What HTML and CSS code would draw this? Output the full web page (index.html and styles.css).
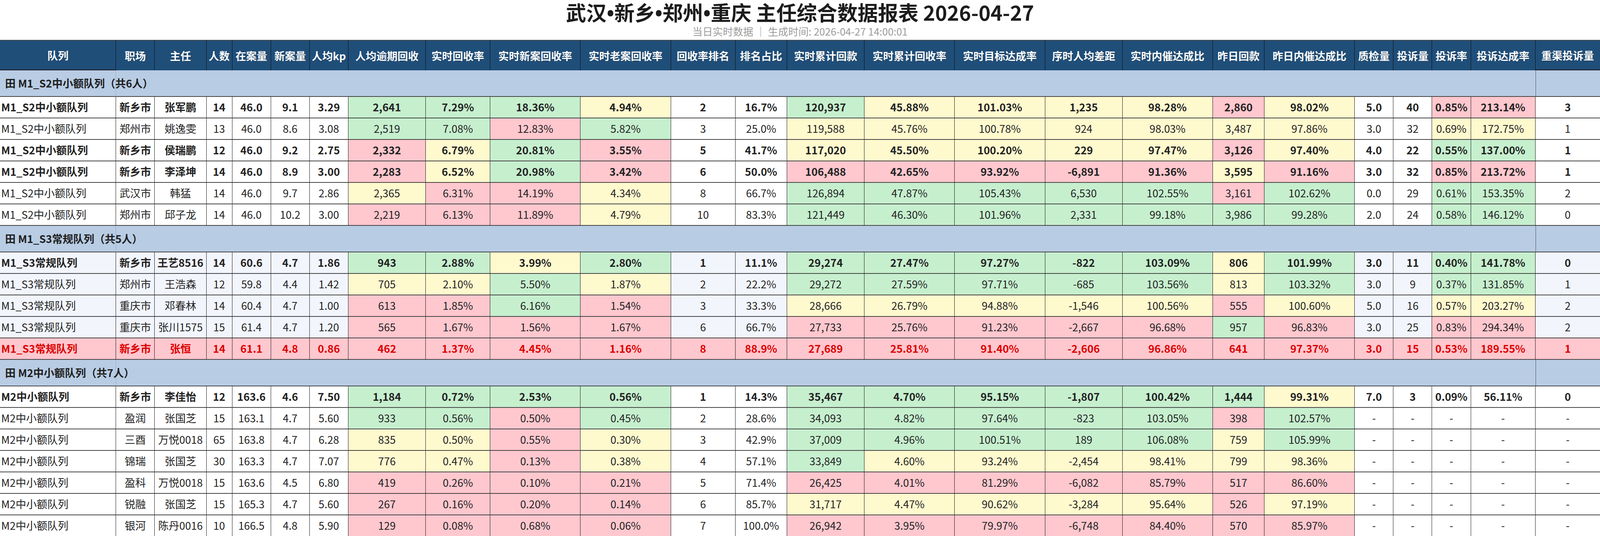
FILE: index.html
```html
<!DOCTYPE html>
<html lang="zh-CN">
<head>
<meta charset="utf-8">
<title>主任综合数据报表</title>
<link rel="stylesheet" href="styles.css">
</head>
<body>
<header class="head">
  <h1 class="title">武汉<span class="dot">•</span>新乡<span class="dot">•</span>郑州<span class="dot">•</span>重庆 主任综合数据报表 2026-04-27</h1>
  <div class="sub">当日实时数据 ｜ 生成时间: 2026-04-27 14:00:01</div>
</header>
<table class="tbl">
  <colgroup>
    <col class="w9"><col class="w3"><col class="w4"><col class="w2"><col class="w3"><col class="w3"><col class="w3">
    <col class="w6"><col class="w5"><col class="w7"><col class="w7"><col class="w5"><col class="w4">
    <col class="w6"><col class="w7"><col class="w7"><col class="w6"><col class="w7"><col class="w4"><col class="w7">
    <col class="w3"><col class="w3"><col class="w3"><col class="w5"><col class="w5">
  </colgroup>
  <thead>
    <tr>
      <th class="edge">队列</th><th>职场</th><th>主任</th><th>人数</th><th>在案量</th><th>新案量</th><th>人均kp</th>
      <th>人均逾期回收</th><th>实时回收率</th><th>实时新案回收率</th><th>实时老案回收率</th><th>回收率排名</th><th>排名占比</th>
      <th>实时累计回款</th><th>实时累计回收率</th><th>实时目标达成率</th><th>序时人均差距</th><th>实时内催达成比</th><th>昨日回款</th><th>昨日内催达成比</th>
      <th>质检量</th><th>投诉量</th><th>投诉率</th><th>投诉达成率</th><th class="edge">重渠投诉量</th>
    </tr>
  </thead>
  <tbody>
    <tr class="grp"><td class="gl"><span class="glabel">田 M1_S2中小额队列（共6人）</span></td><td class="gm" colspan="23"></td><td class="gr"></td></tr>
    <tr class="b"><td class="q">M1_S2中小额队列</td><td>新乡市</td><td>张军鹏</td><td>14</td><td>46.0</td><td>9.1</td><td>3.29</td><td class="g">2,641</td><td class="g">7.29%</td><td class="g">18.36%</td><td class="y">4.94%</td><td>2</td><td>16.7%</td><td class="g">120,937</td><td class="y">45.88%</td><td class="y">101.03%</td><td class="y">1,235</td><td class="y">98.28%</td><td class="p">2,860</td><td class="y">98.02%</td><td>5.0</td><td>40</td><td class="p">0.85%</td><td class="p">213.14%</td><td>3</td></tr>
    <tr><td class="q">M1_S2中小额队列</td><td>郑州市</td><td>姚逸雯</td><td>13</td><td>46.0</td><td>8.6</td><td>3.08</td><td class="g">2,519</td><td class="g">7.08%</td><td class="p">12.83%</td><td class="g">5.82%</td><td>3</td><td>25.0%</td><td class="y">119,588</td><td class="y">45.76%</td><td class="y">100.78%</td><td class="y">924</td><td class="y">98.03%</td><td class="y">3,487</td><td class="y">97.86%</td><td>3.0</td><td>32</td><td class="y">0.69%</td><td class="y">172.75%</td><td>1</td></tr>
    <tr class="b"><td class="q">M1_S2中小额队列</td><td>新乡市</td><td>侯瑞鹏</td><td>12</td><td>46.0</td><td>9.2</td><td>2.75</td><td class="p">2,332</td><td class="y">6.79%</td><td class="g">20.81%</td><td class="p">3.55%</td><td>5</td><td>41.7%</td><td class="y">117,020</td><td class="y">45.50%</td><td class="y">100.20%</td><td class="y">229</td><td class="y">97.47%</td><td class="p">3,126</td><td class="y">97.40%</td><td>4.0</td><td>22</td><td class="g">0.55%</td><td class="g">137.00%</td><td>1</td></tr>
    <tr class="b"><td class="q">M1_S2中小额队列</td><td>新乡市</td><td>李泽坤</td><td>14</td><td>46.0</td><td>8.9</td><td>3.00</td><td class="p">2,283</td><td class="y">6.52%</td><td class="g">20.98%</td><td class="p">3.42%</td><td>6</td><td>50.0%</td><td class="p">106,488</td><td class="p">42.65%</td><td class="p">93.92%</td><td class="p">-6,891</td><td class="p">91.36%</td><td class="y">3,595</td><td class="p">91.16%</td><td>3.0</td><td>32</td><td class="p">0.85%</td><td class="p">213.72%</td><td>1</td></tr>
    <tr><td class="q">M1_S2中小额队列</td><td>武汉市</td><td>韩猛</td><td>14</td><td>46.0</td><td>9.7</td><td>2.86</td><td class="y">2,365</td><td class="p">6.31%</td><td class="p">14.19%</td><td class="y">4.34%</td><td>8</td><td>66.7%</td><td class="g">126,894</td><td class="g">47.87%</td><td class="g">105.43%</td><td class="g">6,530</td><td class="g">102.55%</td><td class="p">3,161</td><td class="g">102.62%</td><td>0.0</td><td>29</td><td class="g">0.61%</td><td class="g">153.35%</td><td>2</td></tr>
    <tr><td class="q">M1_S2中小额队列</td><td>郑州市</td><td>邱子龙</td><td>14</td><td>46.0</td><td>10.2</td><td>3.00</td><td class="p">2,219</td><td class="p">6.13%</td><td class="p">11.89%</td><td class="y">4.79%</td><td>10</td><td>83.3%</td><td class="g">121,449</td><td class="g">46.30%</td><td class="g">101.96%</td><td class="g">2,331</td><td class="g">99.18%</td><td class="g">3,986</td><td class="g">99.28%</td><td>2.0</td><td>24</td><td class="g">0.58%</td><td class="g">146.12%</td><td>0</td></tr>

    <tr class="grp"><td class="gl"><span class="glabel">田 M1_S3常规队列（共5人）</span></td><td class="gm" colspan="23"></td><td class="gr"></td></tr>
    <tr class="alt b"><td class="q">M1_S3常规队列</td><td>新乡市</td><td>王艺8516</td><td>14</td><td>60.6</td><td>4.7</td><td>1.86</td><td class="g">943</td><td class="g">2.88%</td><td class="y">3.99%</td><td class="g">2.80%</td><td>1</td><td>11.1%</td><td class="g">29,274</td><td class="g">27.47%</td><td class="g">97.27%</td><td class="g">-822</td><td class="g">103.09%</td><td class="y">806</td><td class="g">101.99%</td><td>3.0</td><td>11</td><td class="g">0.40%</td><td class="g">141.78%</td><td>0</td></tr>
    <tr class="alt"><td class="q">M1_S3常规队列</td><td>郑州市</td><td>王浩森</td><td>12</td><td>59.8</td><td>4.4</td><td>1.42</td><td class="y">705</td><td class="y">2.10%</td><td class="g">5.50%</td><td class="y">1.87%</td><td>2</td><td>22.2%</td><td class="g">29,272</td><td class="g">27.59%</td><td class="g">97.71%</td><td class="g">-685</td><td class="g">103.56%</td><td class="y">813</td><td class="g">103.32%</td><td>3.0</td><td>9</td><td class="g">0.37%</td><td class="g">131.85%</td><td>1</td></tr>
    <tr class="alt"><td class="q">M1_S3常规队列</td><td>重庆市</td><td>邓春林</td><td>14</td><td>60.4</td><td>4.7</td><td>1.00</td><td class="p">613</td><td class="p">1.85%</td><td class="g">6.16%</td><td class="p">1.54%</td><td>3</td><td>33.3%</td><td class="y">28,666</td><td class="y">26.79%</td><td class="y">94.88%</td><td class="y">-1,546</td><td class="y">100.56%</td><td class="p">555</td><td class="y">100.60%</td><td>5.0</td><td>16</td><td class="y">0.57%</td><td class="y">203.27%</td><td>2</td></tr>
    <tr class="alt"><td class="q">M1_S3常规队列</td><td>重庆市</td><td>张川1575</td><td>15</td><td>61.4</td><td>4.7</td><td>1.20</td><td class="p">565</td><td class="p">1.67%</td><td class="p">1.56%</td><td class="p">1.67%</td><td>6</td><td>66.7%</td><td class="p">27,733</td><td class="p">25.76%</td><td class="p">91.23%</td><td class="p">-2,667</td><td class="p">96.68%</td><td class="g">957</td><td class="p">96.83%</td><td>3.0</td><td>25</td><td class="p">0.83%</td><td class="p">294.34%</td><td>2</td></tr>
    <tr class="hl"><td class="q">M1_S3常规队列</td><td>新乡市</td><td>张恒</td><td>14</td><td>61.1</td><td>4.8</td><td>0.86</td><td>462</td><td>1.37%</td><td>4.45%</td><td>1.16%</td><td>8</td><td>88.9%</td><td>27,689</td><td>25.81%</td><td>91.40%</td><td>-2,606</td><td>96.86%</td><td>641</td><td>97.37%</td><td>3.0</td><td>15</td><td>0.53%</td><td>189.55%</td><td>1</td></tr>

    <tr class="grp"><td class="gl"><span class="glabel">田 M2中小额队列（共7人）</span></td><td class="gm" colspan="23"></td><td class="gr"></td></tr>
    <tr class="b"><td class="q">M2中小额队列</td><td>新乡市</td><td>李佳怡</td><td>12</td><td>163.6</td><td>4.6</td><td>7.50</td><td class="g">1,184</td><td class="g">0.72%</td><td class="g">2.53%</td><td class="g">0.56%</td><td>1</td><td>14.3%</td><td class="g">35,467</td><td class="g">4.70%</td><td class="g">95.15%</td><td class="g">-1,807</td><td class="g">100.42%</td><td class="g">1,444</td><td class="y">99.31%</td><td>7.0</td><td>3</td><td>0.09%</td><td>56.11%</td><td>0</td></tr>
    <tr><td class="q">M2中小额队列</td><td>盈润</td><td>张国芝</td><td>15</td><td>163.1</td><td>4.7</td><td>5.60</td><td class="g">933</td><td class="g">0.56%</td><td class="p">0.50%</td><td class="g">0.45%</td><td>2</td><td>28.6%</td><td class="g">34,093</td><td class="g">4.82%</td><td class="g">97.64%</td><td class="g">-823</td><td class="g">103.05%</td><td class="p">398</td><td class="g">102.57%</td><td>-</td><td>-</td><td>-</td><td>-</td><td>-</td></tr>
    <tr><td class="q">M2中小额队列</td><td>三酉</td><td>万悦0018</td><td>65</td><td>163.8</td><td>4.7</td><td>6.28</td><td class="y">835</td><td class="y">0.50%</td><td class="p">0.55%</td><td class="y">0.30%</td><td>3</td><td>42.9%</td><td class="g">37,009</td><td class="g">4.96%</td><td class="g">100.51%</td><td class="g">189</td><td class="g">106.08%</td><td class="y">759</td><td class="g">105.99%</td><td>-</td><td>-</td><td>-</td><td>-</td><td>-</td></tr>
    <tr><td class="q">M2中小额队列</td><td>锦瑞</td><td>张国芝</td><td>30</td><td>163.3</td><td>4.7</td><td>7.07</td><td class="y">776</td><td class="y">0.47%</td><td class="p">0.13%</td><td class="y">0.38%</td><td>4</td><td>57.1%</td><td class="g">33,849</td><td class="y">4.60%</td><td class="y">93.24%</td><td class="y">-2,454</td><td class="y">98.41%</td><td class="y">799</td><td class="y">98.36%</td><td>-</td><td>-</td><td>-</td><td>-</td><td>-</td></tr>
    <tr><td class="q">M2中小额队列</td><td>盈科</td><td>万悦0018</td><td>15</td><td>163.6</td><td>4.5</td><td>6.80</td><td class="p">419</td><td class="p">0.26%</td><td class="p">0.10%</td><td class="p">0.21%</td><td>5</td><td>71.4%</td><td class="p">26,425</td><td class="p">4.01%</td><td class="p">81.29%</td><td class="p">-6,082</td><td class="p">85.79%</td><td class="p">517</td><td class="p">86.60%</td><td>-</td><td>-</td><td>-</td><td>-</td><td>-</td></tr>
    <tr><td class="q">M2中小额队列</td><td>锐融</td><td>张国芝</td><td>15</td><td>165.3</td><td>4.7</td><td>5.60</td><td class="p">267</td><td class="p">0.16%</td><td class="p">0.20%</td><td class="p">0.14%</td><td>6</td><td>85.7%</td><td class="y">31,717</td><td class="y">4.47%</td><td class="y">90.62%</td><td class="y">-3,284</td><td class="y">95.64%</td><td class="p">526</td><td class="y">97.19%</td><td>-</td><td>-</td><td>-</td><td>-</td><td>-</td></tr>
    <tr><td class="q">M2中小额队列</td><td>银河</td><td>陈丹0016</td><td>10</td><td>166.5</td><td>4.8</td><td>5.90</td><td class="p">129</td><td class="p">0.08%</td><td class="p">0.68%</td><td class="p">0.06%</td><td>7</td><td>100.0%</td><td class="p">26,942</td><td class="p">3.95%</td><td class="p">79.97%</td><td class="p">-6,748</td><td class="p">84.40%</td><td class="p">570</td><td class="p">85.97%</td><td>-</td><td>-</td><td>-</td><td>-</td><td>-</td></tr>
  </tbody>
</table>
</body>
</html>
```

FILE: styles.css
```css
* { box-sizing: border-box; }
html, body { margin: 0; padding: 0; background: #ffffff; }
body {
  font-family: "Noto Sans CJK SC", "Noto Sans", "Liberation Sans", sans-serif;
  color: #222222;
}

.head { text-align: center; }
.title {
  margin: 0;
  font-size: 52px;
  line-height: 62px;
  font-weight: 700;
  color: #1c1c1c;
}
.dot {
  font-family: "Noto Sans", "Liberation Sans", sans-serif;
}
.sub {
  margin-top: 1px;
  font-size: 26px;
  line-height: 30px;
  color: #9c9c9c;
}

.tbl {
  width: 100%;
  margin-top: 7px;
  border-collapse: separate;
  border-spacing: 0;
  table-layout: fixed;
  font-size: 27px;
}
.w2 { width: 1.6129%; }
.w3 { width: 2.4194%; }
.w4 { width: 3.2258%; }
.w5 { width: 4.0323%; }
.w6 { width: 4.8387%; }
.w7 { width: 5.6452%; }
.w9 { width: 7.2581%; }

.tbl th {
  height: 78px;
  padding: 0;
  background: #1f4e79;
  color: #ffffff;
  font-weight: 700;
  text-align: center;
  vertical-align: middle;
  white-space: nowrap;
  border-top: 2px solid #4a4a4a;
  border-right: 1px solid #101010;
  text-shadow: 0 1px 1px rgba(0, 0, 0, 0.35);
}
.tbl th:last-child { border-right: 0; }
.tbl th.edge { border-bottom: 2px solid #1a1a1a; }

.tbl td {
  height: 55px;
  padding: 0;
  text-align: center;
  vertical-align: middle;
  white-space: nowrap;
  line-height: 1.2;
  background: #ffffff;
  border-right: 1px solid #1a1a1a;
  border-bottom: 2px solid #454545;
}
.tbl td:last-child { border-right: 0; }
.tbl td.q { text-align: left; padding-left: 3px; }

.tbl tr.b td { font-weight: 700; }

.tbl tr.alt td { background: #f2f5fc; }
.tbl tr td.g { background: #c6efce; }
.tbl tr td.y { background: #fff9ce; }
.tbl tr td.p { background: #ffc7ce; }

.tbl tr.hl td {
  background: #ffc7ce;
  color: #dd0000;
  font-weight: 700;
}

.tbl tr.grp td {
  height: 68px;
  background: #b8cce4;
  border-right: 0;
  border-bottom: 2px solid #454545;
}
.tbl tr.grp td.gl {
  text-align: left;
  padding-left: 13px;
  overflow: visible;
  border-right: 1px solid rgba(60, 80, 110, 0.25);
}
.tbl tr.grp td.gr { border-left: 1px solid #555555; }
.glabel {
  font-weight: 700;
  color: #1e1e1e;
}
```
